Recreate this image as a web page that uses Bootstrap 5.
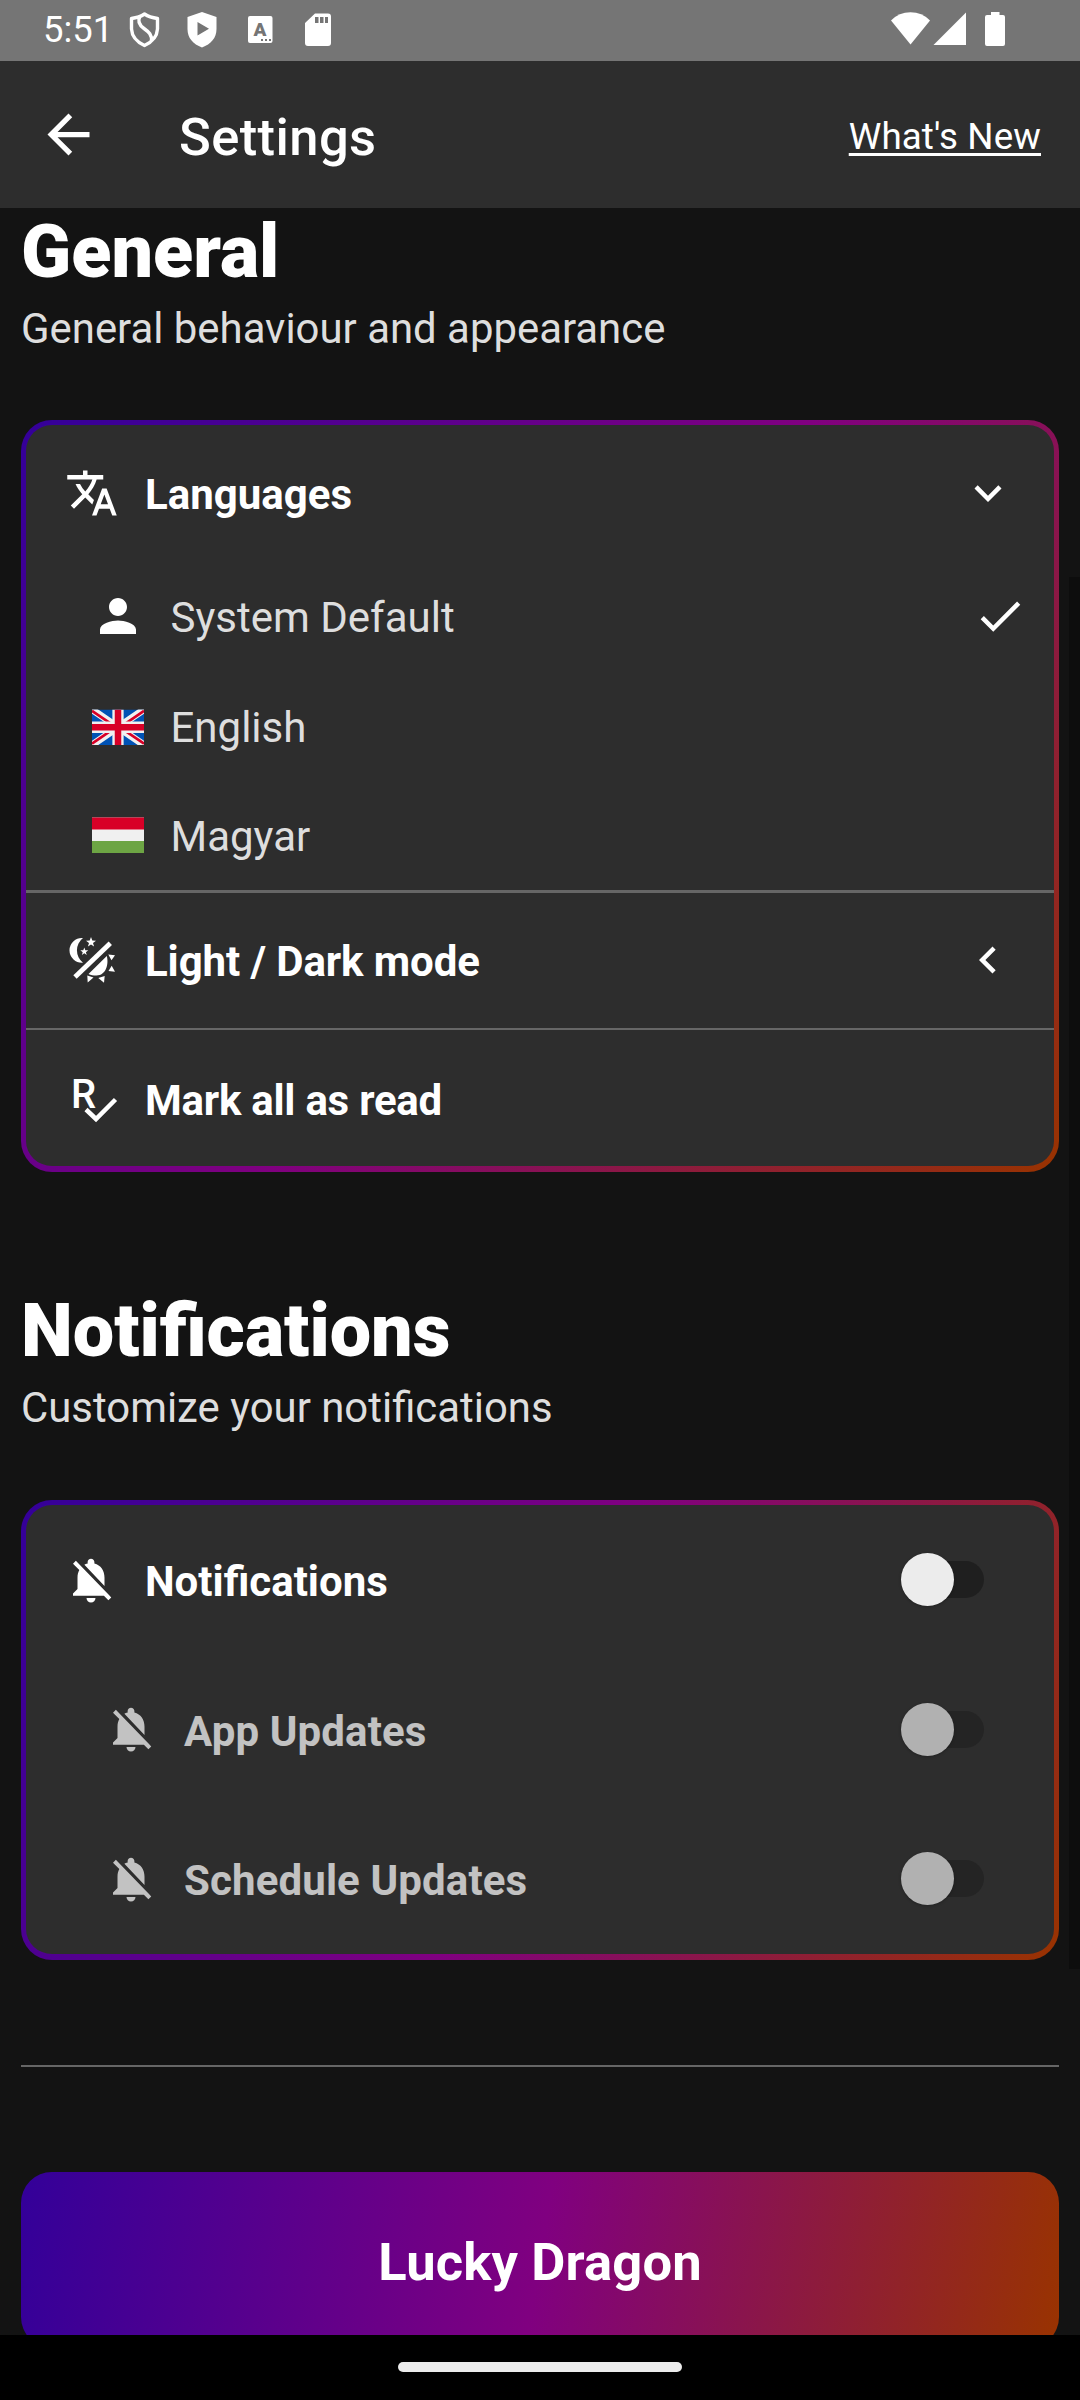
<!DOCTYPE html>
<html lang="en">
<head>
<meta charset="utf-8">
<meta name="viewport" content="width=device-width, initial-scale=1">
<title>Settings</title>
<link href="https://cdn.jsdelivr.net/npm/bootstrap@5.3.0/dist/css/bootstrap.min.css" rel="stylesheet">
<style>
  body { background: #131313; color: #fff; font-family: Roboto, sans-serif; font-size: 42px; line-height: 50px; height: 2400px; overflow: hidden; }
  svg { display: block; flex: none; fill: #fff; overflow: visible; }
  .ico { width: 54px; height: 54px; }
  .status-bar { height: 61px; background: #757575; padding-left: 43px; }
  .clock { font-size: 36.5px; line-height: 60px; width: 79px; }
  .app-bar { height: 147px; background: #2d2d2d; padding: 0 39px 0 36.5px; }
  .app-title { font-size: 52.5px; font-weight: 500; line-height: 62px; letter-spacing: .4px; margin: 4px 0 0 79.5px; }
  .whats-new { font-size: 36.75px; line-height: 44px; padding-top: 4px; letter-spacing: .1px; color: #fff; text-underline-offset: 4px; text-decoration-thickness: 2.5px; text-decoration-skip-ink: none; }
  .screen { height: 2127px; padding: 1px 21px 0; overflow: hidden; }
  .group-title { font-size: 73.7px; line-height: 86px; font-weight: 900; margin: 0 0 9px; }
  .muted { color: #dedede; }
  .subtitle { font-size: 41.9px; margin: 0; }
  .panel { border: 5px solid transparent; border-bottom-width: 6px; border-radius: 31px; overflow: hidden; }
  .panel-general { margin-top: 66px; background: linear-gradient(#2d2d2d, #2d2d2d) padding-box, linear-gradient(125.9deg, #309, #800080 50%, #930) border-box; }
  .panel-notify { margin-top: 67px; background: linear-gradient(#2d2d2d, #2d2d2d) padding-box, linear-gradient(113.9deg, #309, #800080 50%, #930) border-box; }
  .item { padding: 0 39.5px 0 38.5px; font-weight: 700; }
  .item-label { margin-left: 26.5px; padding-top: 4px; }
  .label-snug { letter-spacing: -.1px; }
  .label-tight { letter-spacing: -.25px; padding-top: 2px; }
  .option { padding: 0 27px 0 65px; height: 109px; }
  .option .ico { margin: 0 0 4px; }
  .option-label { margin-left: 25.5px; }
  .notify-row { height: 149.6px; padding: 0 70px 0 38.3px; }
  .notify-row .item-label { margin-left: 26.7px; }
  .notify-row.sub { padding-left: 78.3px; }
  .notify-row.sub .item-label { margin-left: 25.7px; padding-top: 5px; letter-spacing: .13px; }
  .sub .item-label, .sub .ico { opacity: .71; }
  .rule { background: #666; }
  .toggle { position: relative; width: 83px; height: 54px; }
  .toggle::before { content: ""; position: absolute; right: 0; top: 8.5px; width: 62px; height: 37px; border-radius: 19px; background: #1f1f1f; }
  .toggle::after { content: ""; position: absolute; left: 0; top: .5px; width: 53px; height: 53px; border-radius: 50%; background: #ececec; box-shadow: 0 1px 3px rgba(0,0,0,.25); }
  .sub .toggle::before { background: #242424; }
  .sub .toggle::after { background: #b1b1b1; }
  .cta { height: 176px; border: 0; border-radius: 31px; padding-top: 6px; font-size: 52.5px; font-weight: 700; letter-spacing: .15px; color: #fff; background: linear-gradient(99.6deg, #309, #800080 50%, #930); }
  .scroll-thumb { position: absolute; right: 0; top: 577px; width: 11px; height: 1392px; background: #0d0d0d; }
  .nav-area { height: 65px; background: #000; padding-top: 27px; }
  .pill { width: 284px; height: 10px; border-radius: 5px; background: #ececec; }
</style>
</head>
<body>
<svg width="0" height="0" class="position-absolute">
  <defs>
    <symbol id="bell-off" viewBox="0 0 24 24"><path d="M20 18.69L7.84 6.14 5.27 3.49 4 4.76l2.8 2.8v.01c-.52.99-.8 2.16-.8 3.42v5l-2 2v1h13.73l2 2L21 19.73l-1-1.04zM12 22c1.11 0 2-.89 2-2h-4c0 1.11.89 2 2 2zm6-7.32V11c0-3.08-1.64-5.64-4.5-6.32V4c0-.83-.67-1.5-1.5-1.5s-1.5.67-1.5 1.5v.68c-.15.03-.29.08-.42.12-.1.03-.2.07-.3.11h-.01c-.01 0-.01 0-.02.01-.23.09-.46.2-.68.31 0 0-.01 0-.01.01L18 14.68z"/></symbol>
  </defs>
</svg>

<header>
  <div class="status-bar d-flex">
    <span class="clock">5:51</span>
    <svg width="900" height="61" viewBox="122 0 900 61">
      <path d="M144.500 14C140 17 135 18 131.500 18.500V29C132 38 138 42.500 144.500 45.500C151 42.500 157 38 157.500 29V18.500C154 18 149 17 144.500 14Z" fill="none" stroke="#fff" stroke-width="3.400" stroke-linejoin="round"/>
      <path d="M140 16C137.500 21 139 25 144 28.500C149 32 152 35 151.500 41" fill="none" stroke="#fff" stroke-width="3.400"/>
      <path fill-rule="evenodd" d="M202 12L216.500 17V29C216.500 38 211 44 202 47.500C193 44 187.500 38 187.500 29V17ZM197.500 22V35.500L209 28.800Z"/>
      <rect x="248" y="16" width="24.500" height="27" rx="2"/>
      <text x="260" y="36" text-anchor="middle" font-family="Roboto" font-size="19" font-weight="900" fill="#757575">A</text>
      <path d="M261 39h2v2h-2zM265 39h2v2h-2zM269 39h2v2h-2z" fill="#757575"/>
      <path fill-rule="evenodd" d="M315 13.500H328Q331 13.500 331 16.500V43Q331 46 328 46H308Q305 46 305 43V23ZM315 17V23H318.500V17ZM320 17V23H323.500V17ZM325 17V23H328V17Z"/>
      <path d="M891 20.500Q899 12.300 910.500 12.300T930 20.500L910.500 44.500Z"/>
      <path d="M966 12.500V45H933.500Z"/>
      <path d="M991 12H999.500V15H1003Q1005 15 1005 17V44Q1005 46 1003 46H987Q985 46 985 44V17Q985 15 987 15H991Z"/>
    </svg>
  </div>
  <nav class="app-bar d-flex align-items-center">
    <svg width="63" height="63" viewBox="0 0 24 24"><path d="M20 11H7.830l5.590-5.590L12 4l-8 8 8 8 1.410-1.410L7.830 13H20v-2z"/></svg>
    <h1 class="app-title">Settings</h1>
    <a href="#" class="whats-new ms-auto">What's New</a>
  </nav>
</header>

<main class="screen d-flex flex-column">
  <h2 class="group-title">General</h2>
  <p class="muted subtitle">General behaviour and appearance</p>

  <section class="panel panel-general flex-shrink-0">
    <div class="item d-flex align-items-center pb-1" style="height:139px">
      <svg class="ico" viewBox="0 0 24 24"><path d="M12.870 15.070l-2.540-2.510.030-.030c1.740-1.940 2.980-4.170 3.710-6.530H17V4h-7V2H8v2H1v1.990h11.170C11.500 7.920 10.440 9.750 9 11.350 8.070 10.320 7.300 9.190 6.690 8h-2c.730 1.630 1.730 3.170 2.980 4.560l-5.090 5.020L4 19l5-5 3.110 3.110.760-2.040zM18.500 10h-2L12 22h2l1.120-3h4.750L21 22h2l-4.500-12zm-2.620 7l1.620-4.330L19.120 17h-3.240z"/></svg>
      <span class="item-label">Languages</span>
      <svg class="ico ms-auto" viewBox="0 0 24 24"><path d="M16.590 8.590L12 13.170 7.410 8.590 6 10l6 6 6-6z"/></svg>
    </div>
    <div class="option d-flex align-items-center" style="padding-bottom:2px">
      <svg class="ico" viewBox="0 0 24 24"><path d="M12 12c2.210 0 4-1.790 4-4s-1.790-4-4-4-4 1.790-4 4 1.790 4 4 4zm0 2c-2.670 0-8 1.340-8 4v2h16v-2c0-2.660-5.330-4-8-4z"/></svg>
      <span class="option-label muted">System Default</span>
      <svg class="ico ms-auto" viewBox="0 0 24 24"><path d="M9 16.170L4.830 12l-1.420 1.410L9 19 21 7l-1.410-1.410z"/></svg>
    </div>
    <div class="option d-flex align-items-center">
      <svg class="ico" viewBox="-1 0 54 54">
        <svg x="0" y="10.500" width="52" height="35.500" viewBox="0 0 60 40" preserveAspectRatio="none" style="overflow:hidden">
          <path d="M0 0H60V40H0Z" fill="#0052b4"/>
          <path d="M0 0L60 40M60 0L0 40" stroke="#f0f0f0" stroke-width="8"/>
          <path d="M0 1.500L26 18.800M34 21.200L60 38.500M60 1.500L36 17.500M24 22.500L0 38.500" stroke="#d80027" stroke-width="3"/>
          <path d="M30 0V40M0 20H60" stroke="#f0f0f0" stroke-width="13"/>
          <path d="M30 0V40M0 20H60" stroke="#d80027" stroke-width="7.500"/>
        </svg>
      </svg>
      <span class="option-label muted">English</span>
    </div>
    <div class="option d-flex align-items-center" style="height:108px">
      <svg class="ico" viewBox="-1 0 54 54"><path d="M0 10.500H52V46H0Z" fill="#f0f0f0"/><path d="M0 10.500H52V22.500H0Z" fill="#d80027"/><path d="M0 34H52V46H0Z" fill="#6da544"/></svg>
      <span class="option-label muted" style="padding-top:2px">Magyar</span>
    </div>
    <div class="rule" style="height:3px"></div>
    <div class="item d-flex align-items-center" style="height:135px;padding-bottom:1px">
      <svg class="ico" viewBox="64 933 54 54">
        <path d="M82 938A12.400 12.400 0 1 0 82 962.700A15.600 15.600 0 0 1 82 938Z"/>
        <path id="star" d="M90 937L91.300 940.600L95 940.700L92 943L93.100 946.600L90 944.400L86.900 946.600L88 943L85 940.700L88.700 940.600Z"/>
        <use href="#star" transform="translate(12.200 207.200) scale(.79)"/>
        <path d="M74 977L109.300 943.300" stroke="#fff" stroke-width="4.800"/>
        <path d="M87.500 974L105.800 956C108 964 105 975.500 95.500 975.500C92 975.500 90 975 87.500 974ZM107.300 954.500L114 955.300L110.500 960.200ZM110.700 965.800L114 971.800L107.500 971ZM86.300 975.500L92.500 977.500L86.700 982.500ZM97.300 978L103.700 976L103 982.800Z"/>
      </svg>
      <span class="item-label label-snug">Light / Dark mode</span>
      <svg class="ico ms-auto" viewBox="0 0 24 24"><path d="M15.410 7.410L14 6l-6 6 6 6 1.410-1.410L10.830 12z"/></svg>
    </div>
    <div class="rule" style="height:2px"></div>
    <div class="item d-flex align-items-center" style="height:136px;padding-top:4px">
      <svg class="ico" viewBox="64 1073 54 54"><path d="M85 1109.500L95 1119L114.500 1099.500" fill="none" stroke="#fff" stroke-width="4.500"/><text x="70" y="1108" font-family="Roboto" font-size="40" font-weight="500">R</text></svg>
      <span class="item-label label-tight">Mark all as read</span>
    </div>
  </section>

  <h2 class="group-title" style="margin-top:116px">Notifications</h2>
  <p class="muted subtitle">Customize your notifications</p>

  <section class="panel panel-notify flex-shrink-0">
    <div class="item notify-row d-flex align-items-center">
      <svg class="ico"><use href="#bell-off"/></svg>
      <span class="item-label">Notifications</span>
      <span class="toggle ms-auto"></span>
    </div>
    <div class="item notify-row sub d-flex align-items-center">
      <svg class="ico"><use href="#bell-off"/></svg>
      <span class="item-label">App Updates</span>
      <span class="toggle ms-auto"></span>
    </div>
    <div class="item notify-row sub d-flex align-items-center">
      <svg class="ico"><use href="#bell-off"/></svg>
      <span class="item-label">Schedule Updates</span>
      <span class="toggle ms-auto"></span>
    </div>
  </section>

  <div class="rule flex-shrink-0" style="height:2px;margin-top:105px"></div>
  <button class="cta w-100 flex-shrink-0" style="margin-top:105px">Lucky Dragon</button>
</main>
<div class="scroll-thumb"></div>
<footer class="nav-area"><div class="pill mx-auto"></div></footer>
<script src="https://cdn.jsdelivr.net/npm/bootstrap@5.3.0/dist/js/bootstrap.bundle.min.js"></script>
</body>
</html>
